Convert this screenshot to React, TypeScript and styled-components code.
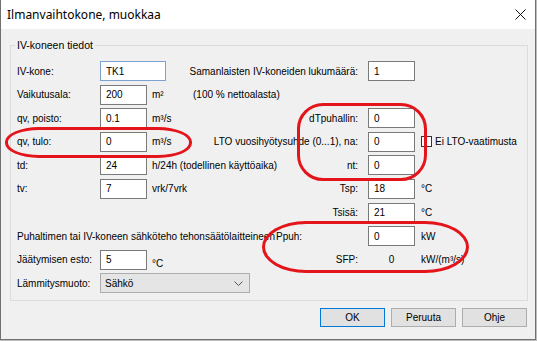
import React from 'react';
import styled, { createGlobalStyle } from 'styled-components';

const GlobalStyle = createGlobalStyle`
  html, body {
    margin: 0;
    padding: 0;
    background: #bdbdbd;
  }
  body {
    font-family: "Liberation Sans", Arial, sans-serif;
    font-size: 10px;
    color: #000;
  }
`;

const Dialog = styled.div`
  position: relative;
  width: 534px;
  height: 339px;
  border: 1px solid #707070;
  border-top: none;
  background: #f0f0f0;
  display: flex;
  flex-direction: column;
`;

const TitleBar = styled.div`
  height: 29px;
  background: #fff;
  display: flex;
  align-items: center;
  justify-content: space-between;
  padding-left: 6px;
  font-family: "Noto Sans", "Open Sans", sans-serif;
  font-size: 12px;
`;

const CloseBtn = styled.div`
  width: 30px;
  height: 29px;
  display: flex;
  align-items: center;
  justify-content: center;
`;

const Group = styled.fieldset`
  margin: 10px 7px 0 9px;
  padding: 10px 6px 7px 6px;
  border: 1px solid #dcdcdc;
  min-width: 0;
`;

const Legend = styled.legend`
  padding: 0 2px;
  margin-left: -2px;
  font-size: 10.5px;
`;

const Rows = styled.div`
  display: flex;
  flex-direction: column;
  gap: 3.6px;
`;

const Row = styled.div`
  display: flex;
  align-items: center;
  height: 20px;
  white-space: nowrap;
`;

const Label = styled.span`
  width: 83px;
  flex: none;
`;

const LongText = styled.span`
  flex: none;
  margin-right: 1px;
`;

const TextBox = styled.input<{ $w?: number; $focus?: boolean }>`
  width: ${(p) => p.$w ?? 47}px;
  height: 20px;
  flex: none;
  box-sizing: border-box;
  border: 1px solid ${(p) => (p.$focus ? '#7aa3cf' : '#7a7a7a')};
  background: #fff;
  padding: 0 0 0 5px;
  margin: 0;
  font: inherit;
  color: #000;
  outline: none;
`;

const Middle = styled.div`
  flex: 1;
  min-width: 0;
  display: flex;
  align-items: center;
`;

const Unit = styled.span<{ $drop?: boolean }>`
  padding-left: 5px;
  min-width: 46px;
  box-sizing: border-box;
  position: relative;
  top: ${(p) => (p.$drop ? 4 : 0)}px;
`;

const RightLabel = styled.span`
  margin-left: auto;
  padding-right: 10px;
`;

const PlainLabel = styled.span`
  padding-left: 0;
`;

const Value = styled.span`
  width: 47px;
  flex: none;
  text-align: center;
`;

const Suffix = styled.div`
  width: 106px;
  flex: none;
  box-sizing: border-box;
  padding-left: 6px;
  display: flex;
  align-items: center;
  gap: 3px;
`;

const Check = styled.span`
  width: 11px;
  height: 11px;
  box-sizing: border-box;
  border: 1px solid #333;
  background: #fff;
  flex: none;
`;

const Select = styled.div`
  width: 150px;
  height: 20px;
  box-sizing: border-box;
  border: 1px solid #adadad;
  background: #e5e5e5;
  display: flex;
  align-items: center;
  justify-content: space-between;
  padding: 0 6px 0 4px;
`;

const ButtonBar = styled.div`
  display: flex;
  justify-content: flex-end;
  gap: 6px;
  margin: 7px 8px 0 0;
`;

const Button = styled.button<{ $primary?: boolean }>`
  width: 65px;
  height: 19px;
  box-sizing: border-box;
  border: 1px solid ${(p) => (p.$primary ? '#0078d7' : '#adadad')};
  background: #e1e1e1;
  font: inherit;
  color: #000;
  padding: 0;
`;

const Ring = styled.div`
  position: absolute;
  box-sizing: border-box;
  border: 3px solid #e4141b;
  pointer-events: none;
`;

const Chevron = () => (
  <svg width="9" height="5" viewBox="0 0 9 5">
    <path d="M0.5 0.5 L4.5 4.5 L8.5 0.5" fill="none" stroke="#555" strokeWidth="1" />
  </svg>
);

export default function App() {
  return (
    <>
      <GlobalStyle />
      <Dialog>
        <TitleBar>
          <span>Ilmanvaihtokone, muokkaa</span>
          <CloseBtn>
            <svg width="11" height="11" viewBox="0 0 11 11">
              <path d="M0.5 0.5 L10.5 10.5 M10.5 0.5 L0.5 10.5" stroke="#111" strokeWidth="1" />
            </svg>
          </CloseBtn>
        </TitleBar>

        <Group>
          <Legend>IV-koneen tiedot</Legend>
          <Rows>
            <Row>
              <Label>IV-kone:</Label>
              <TextBox $w={66} $focus readOnly defaultValue="TK1" />
              <Middle>
                <RightLabel>Samanlaisten IV-koneiden lukumäärä:</RightLabel>
              </Middle>
              <TextBox readOnly defaultValue="1" />
              <Suffix />
            </Row>
            <Row>
              <Label>Vaikutusala:</Label>
              <TextBox readOnly defaultValue="200" />
              <Middle>
                <Unit>m²</Unit>
                <PlainLabel>(100 % nettoalasta)</PlainLabel>
              </Middle>
            </Row>
            <Row>
              <Label>qv, poisto:</Label>
              <TextBox readOnly defaultValue="0.1" />
              <Middle>
                <Unit>m³/s</Unit>
                <RightLabel>dTpuhallin:</RightLabel>
              </Middle>
              <TextBox readOnly defaultValue="0" />
              <Suffix />
            </Row>
            <Row>
              <Label>qv, tulo:</Label>
              <TextBox readOnly defaultValue="0" />
              <Middle>
                <Unit>m³/s</Unit>
                <RightLabel>LTO vuosihyötysuhde (0...1), na:</RightLabel>
              </Middle>
              <TextBox readOnly defaultValue="0" />
              <Suffix>
                <Check />
                <span>Ei LTO-vaatimusta</span>
              </Suffix>
            </Row>
            <Row>
              <Label>td:</Label>
              <TextBox readOnly defaultValue="24" />
              <Middle>
                <Unit>h/24h (todellinen käyttöaika)</Unit>
                <RightLabel>nt:</RightLabel>
              </Middle>
              <TextBox readOnly defaultValue="0" />
              <Suffix />
            </Row>
            <Row>
              <Label>tv:</Label>
              <TextBox readOnly defaultValue="7" />
              <Middle>
                <Unit>vrk/7vrk</Unit>
                <RightLabel>Tsp:</RightLabel>
              </Middle>
              <TextBox readOnly defaultValue="18" />
              <Suffix>°C</Suffix>
            </Row>
            <Row>
              <Middle>
                <RightLabel>Tsisä:</RightLabel>
              </Middle>
              <TextBox readOnly defaultValue="21" />
              <Suffix>°C</Suffix>
            </Row>
            <Row>
              <LongText>Puhaltimen tai IV-koneen sähköteho tehonsäätölaitteineen</LongText>
              <Middle>
                <PlainLabel>Ppuh:</PlainLabel>
              </Middle>
              <TextBox readOnly defaultValue="0" />
              <Suffix>kW</Suffix>
            </Row>
            <Row>
              <Label>Jäätymisen esto:</Label>
              <TextBox readOnly defaultValue="5" />
              <Middle>
                <Unit $drop>°C</Unit>
                <RightLabel>SFP:</RightLabel>
              </Middle>
              <Value>0</Value>
              <Suffix>kW/(m³/s)</Suffix>
            </Row>
            <Row>
              <Label>Lämmitysmuoto:</Label>
              <Select>
                <span>Sähkö</span>
                <Chevron />
              </Select>
            </Row>
          </Rows>
        </Group>

        <ButtonBar>
          <Button $primary>OK</Button>
          <Button>Peruuta</Button>
          <Button>Ohje</Button>
        </ButtonBar>

        <Ring style={{ left: 4, top: 127, width: 187, height: 31, borderRadius: '34px / 15px' }} />
        <Ring style={{ left: 296, top: 103, width: 130, height: 78, borderRadius: 26 }} />
        <Ring style={{ left: 261, top: 221, width: 207, height: 52, borderRadius: '44px / 26px' }} />
      </Dialog>
    </>
  );
}
